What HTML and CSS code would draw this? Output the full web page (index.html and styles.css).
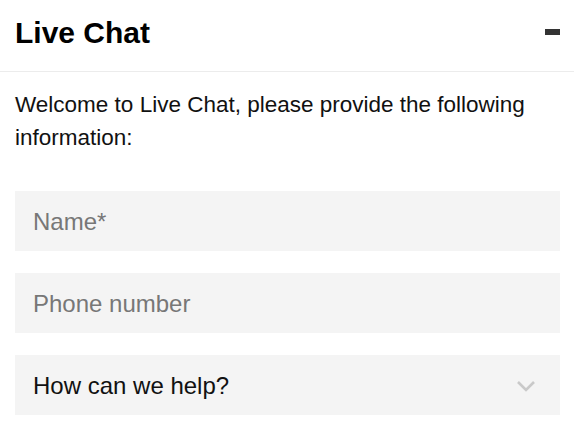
FILE: index.html
```html
<!DOCTYPE html>
<html lang="en">
<head>
    <meta charset="UTF-8">
    <meta name="viewport" content="width=device-width, initial-scale=1.0">
    <title>Live Chat</title>
    <link rel="stylesheet" href="styles.css">
</head>
<body>
    <div class="chat">
        <div class="chat-header">
            <h2>Live Chat</h2>
            <span class="minimize"></span>
        </div>

        <div class="chat-body">
            <p class="intro">Welcome to Live Chat, please provide the following information:</p>
            <form id="chatForm">
                <input type="text" class="field" placeholder="Name*">
                <input type="text" class="field" placeholder="Phone number">
                <div class="field select">
                    <span>How can we help?</span>
                    <svg width="20" height="12" viewBox="0 0 20 12">
                        <polyline points="2,2 10,10 18,2" fill="none" stroke="#c9c9c9" stroke-width="2.6"/>
                    </svg>
                </div>
            </form>
        </div>
    </div>
</body>
</html>
```

FILE: styles.css
```css
body {
    margin: 0;
    font-family: 'Liberation Sans', Arial, sans-serif;
    background: #ffffff;
    color: #111111;
}
.chat {
    width: 574px;
}
.chat-header {
    display: flex;
    justify-content: space-between;
    align-items: flex-start;
    height: 72px;
    box-sizing: border-box;
    padding: 16px 14px 0 15px;
    border-bottom: 1px solid #ececec;
}
.chat-header h2 {
    margin: 0;
    font-size: 30px;
    line-height: 34px;
    font-weight: bold;
    color: #000000;
}
.minimize {
    display: block;
    width: 15px;
    height: 6px;
    margin-top: 13px;
    background: #333333;
}
.chat-body {
    padding: 16px 14px 0 15px;
}
.intro {
    margin: 0 0 37px;
    font-size: 22.5px;
    line-height: 33px;
}
#chatForm {
    display: flex;
    flex-direction: column;
    gap: 22px;
}
.field {
    display: block;
    width: 100%;
    height: 60px;
    box-sizing: border-box;
    padding: 1px 18px 0;
    border: none;
    background: #f4f4f4;
    font-family: inherit;
    font-size: 24px;
    color: #111111;
    outline: none;
}
.field::placeholder {
    color: #777777;
}
.select {
    display: flex;
    align-items: center;
    justify-content: space-between;
    padding-right: 24px;
}
```
